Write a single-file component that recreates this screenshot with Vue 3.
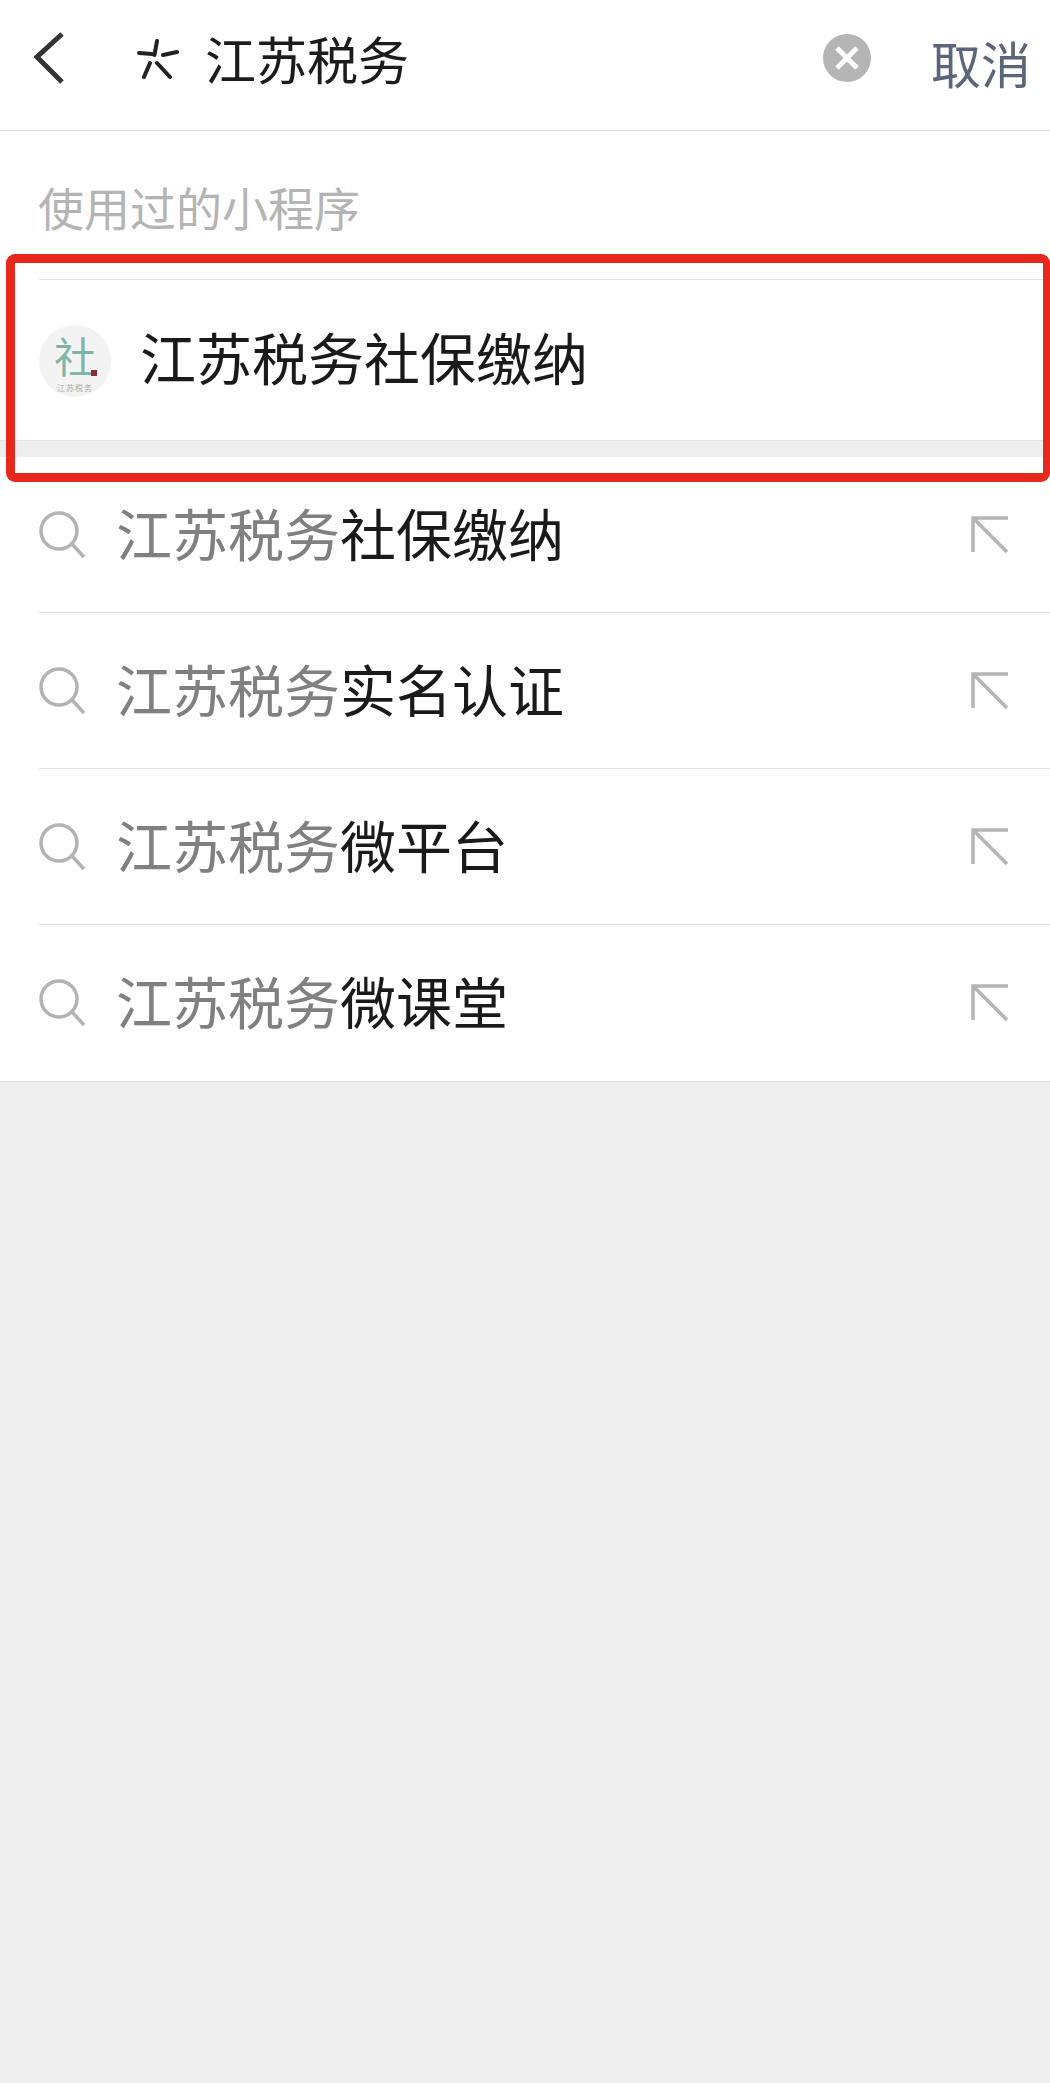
<script setup>
const suggestions = [
  { rest: '社保缴纳' },
  { rest: '实名认证' },
  { rest: '微平台' },
  { rest: '微课堂' },
];
</script>

<template>
  <div class="page">
    <header class="search-bar">
      <svg class="back" width="40" height="60" viewBox="0 0 40 60">
        <path d="M28 6 L3 29 L28 54" />
      </svg>
      <svg class="sou" width="46" height="46" viewBox="0 0 46 46">
        <path d="M20 2 L17.5 16 M2 14 L15 15 M26 16 L40 13 M7 38 L13 24 M20 24 L33 38" />
      </svg>
      <span class="query">江苏税务</span>
      <svg class="clear" width="48" height="48" viewBox="0 0 48 48">
        <circle cx="24" cy="24" r="24" />
        <path d="M14 14 L34 34 M34 14 L14 34" />
      </svg>
      <span class="cancel">取消</span>
    </header>

    <section class="used">
      <div class="used-title">使用过的小程序</div>
      <div class="app-row">
        <div class="app-logo">
          <span class="logo-char">社</span>
          <span class="logo-sub">江苏税务</span>
          <i class="logo-seal"></i>
        </div>
        <span class="app-name">江苏税务社保缴纳</span>
      </div>
    </section>

    <div class="gap"></div>

    <ul class="list">
      <li v-for="item in suggestions" :key="item.rest" class="row">
        <svg class="mag" width="50" height="50" viewBox="0 0 50 50">
          <circle cx="20" cy="21" r="18" />
          <path d="M33 34 L45 47" />
        </svg>
        <div class="row-body">
          <span class="row-text"><span class="muted">江苏税务</span>{{ item.rest }}</span>
          <svg class="fill" width="40" height="40" viewBox="0 0 40 40">
            <path d="M3 37 V3 H38 M3 3 L37 37" />
          </svg>
        </div>
      </li>
    </ul>

    <div class="red-box"></div>
  </div>
</template>

<style scoped>
.page {
  position: relative;
  min-height: 2083px;
  background: #eeeeee;
  font-family: "Noto Sans CJK SC", "Noto Sans", sans-serif;
  overflow: hidden;
}

.search-bar {
  height: 130px;
  display: flex;
  align-items: center;
  background: #fff;
  border-bottom: 1px solid #e4e4e4;
  box-sizing: content-box;
}

.back {
  margin-left: 34px;
  margin-top: -14px;
  flex: none;
}

.back path {
  fill: none;
  stroke: #333;
  stroke-width: 5;
}

.sou {
  margin-left: 63px;
  margin-top: -7px;
  flex: none;
}

.sou path {
  fill: none;
  stroke: #222;
  stroke-width: 4;
  stroke-linecap: round;
}

.query {
  margin-left: 22px;
  margin-top: -14px;
  font-size: 51px;
  line-height: 60px;
  color: #1c1c1c;
  flex: 1;
}

.clear {
  margin-top: -14px;
  flex: none;
}

.clear circle {
  fill: #b5b5b5;
}

.clear path {
  fill: none;
  stroke: #fff;
  stroke-width: 5;
}

.cancel {
  margin-left: 60px;
  margin-right: 19px;
  margin-top: -6px;
  font-size: 50px;
  line-height: 60px;
  color: #5b6579;
}

.used {
  background: #fff;
  padding-left: 39px;
}

.used-title {
  height: 148px;
  box-sizing: border-box;
  margin-left: -1px;
  padding-top: 45px;
  font-size: 46px;
  line-height: 60px;
  color: #b4b4b4;
}

.app-row {
  height: 162px;
  box-sizing: border-box;
  display: flex;
  align-items: center;
  border-top: 1px solid #e4e4e4;
}

.app-logo {
  position: relative;
  width: 72px;
  height: 72px;
  border-radius: 50%;
  background: #f3f3f3;
  display: flex;
  flex-direction: column;
  align-items: center;
  flex: none;
}

.logo-char {
  margin-top: 10px;
  font-size: 42px;
  line-height: 40px;
  font-weight: 400;
  color: #7fb5a6;
}

.logo-sub {
  margin-top: 8px;
  font-size: 8px;
  line-height: 10px;
  letter-spacing: 1px;
  color: #aaa;
}

.logo-seal {
  position: absolute;
  left: 52px;
  top: 45px;
  width: 6px;
  height: 6px;
  background: #8a2a3a;
}

.app-name {
  margin-left: 29px;
  margin-bottom: 10px;
  font-size: 56px;
  line-height: 70px;
  color: #1a1a1a;
}

.gap {
  height: 16px;
  border-top: 1px solid #e4e4e4;
  box-sizing: content-box;
  margin-top: -1px;
}

.list {
  margin: 0;
  padding: 0 0 0 39px;
  list-style: none;
  background: #fff;
  border-bottom: 1px solid #dfdfdf;
}

.row {
  height: 156px;
  display: flex;
  align-items: center;
}

.mag {
  flex: none;
}

.mag circle,
.mag path {
  fill: none;
  stroke: #b3b3b3;
  stroke-width: 3.5;
}

.row-body {
  height: 100%;
  flex: 1;
  display: flex;
  align-items: center;
  justify-content: space-between;
  margin-left: -50px;
  padding-left: 77px;
  padding-right: 40px;
  border-bottom: 1px solid #e4e4e4;
  box-sizing: border-box;
}

.row:last-child .row-body {
  border-bottom: 0;
}

.row-text {
  margin-bottom: 6px;
  font-size: 56px;
  line-height: 70px;
  color: #1a1a1a;
}

.muted {
  color: #808080;
}

.fill path {
  fill: none;
  stroke: #b5b5b5;
  stroke-width: 3.5;
}

.red-box {
  position: absolute;
  left: 6px;
  top: 254px;
  width: 1044px;
  height: 228px;
  box-sizing: border-box;
  border: 9px solid #e7281c;
  border-right-width: 7px;
  border-radius: 9px;
}
</style>
